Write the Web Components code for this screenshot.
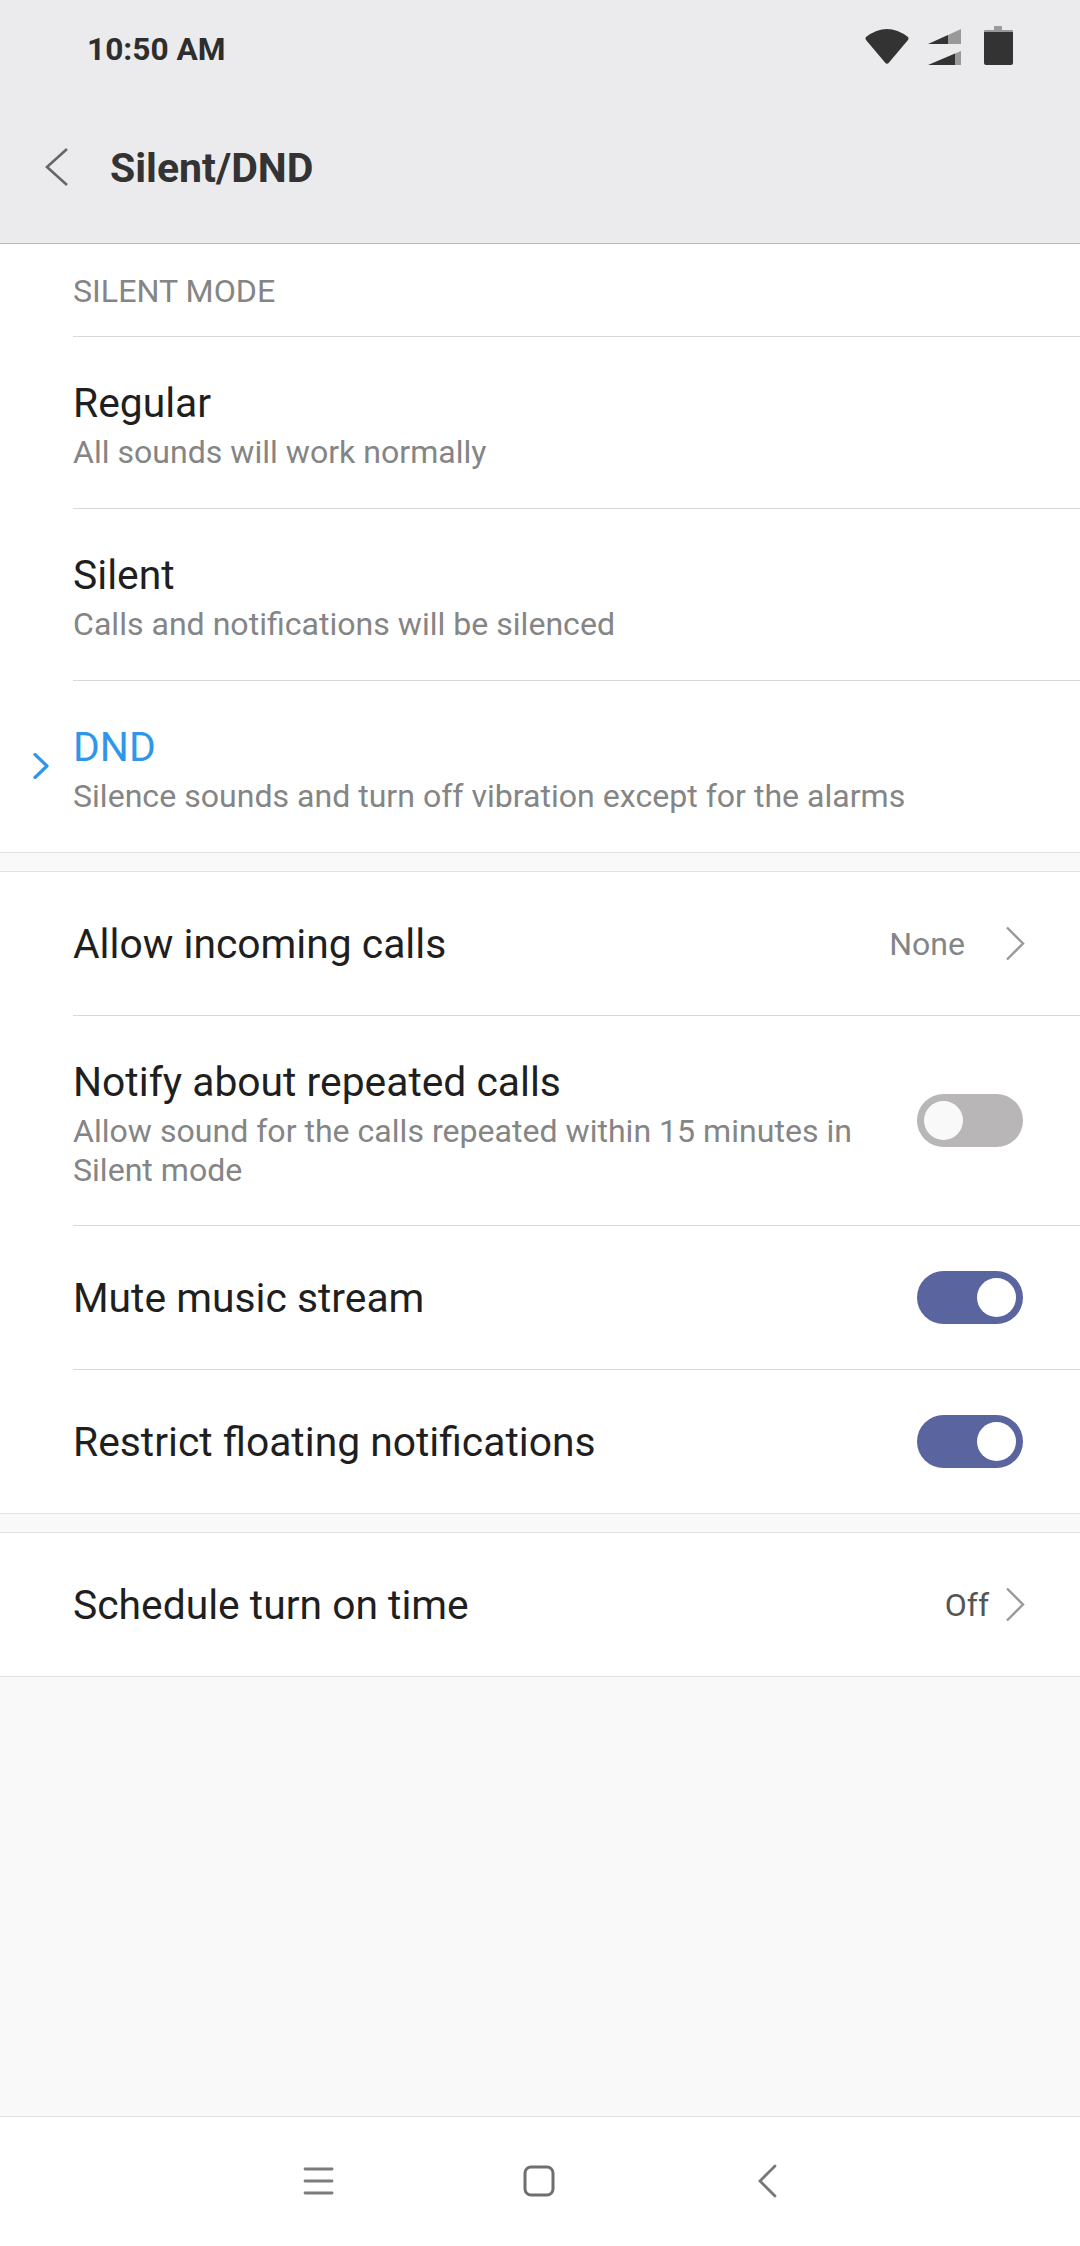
<!DOCTYPE html>
<html>
<head>
<meta charset="utf-8">
<title>Silent/DND</title>
<style>
  html, body { margin: 0; padding: 0; }
  body {
    width: 1080px;
    height: 2246px;
    background: #f9f9f9;
    font-family: Roboto, "Liberation Sans", sans-serif;
    display: flex;
    flex-direction: column;
    overflow: hidden;
  }
  dnd-spacer { flex: 1; }
</style>
</head>
<body>
<template id="header-tpl">
  <style>
    :host { display: block; height: 243px; background: #ebebed; border-bottom: 1px solid #b9b9b9; color: #333; }
    .status { height: 97px; display: flex; align-items: center; justify-content: space-between; padding: 0 64px 0 87px; }
    .time { font-size: 31.700px; font-weight: 700; color: #2e2e2e; padding-top: 1px; }
    .bar { height: 145px; display: flex; align-items: center; padding: 0 0 5px 44px; box-sizing: border-box; }
    h1 { margin: 2px 0 0 40px; font-size: 41px; font-weight: 700; color: #333; }
    svg { display: block; }
  </style>
  <div class="status">
    <span class="time">10:50 AM</span>
    <svg width="152" height="49" viewBox="0 0 152 49">
      <path d="M2 13Q23 -3 44 13Q45 14.500 44 16L25 38.500Q23 41 21 38.500L2 16Q1 14.500 2 13Z" fill="#333"/>
      <path d="M64 20L84 10.900V20Z" fill="#333"/>
      <path d="M84 10.900L97 5V20H84Z" fill="#999"/>
      <path d="M64 41L91 29.500V41Z" fill="#333"/>
      <path d="M91 29.500L97 27V41H91Z" fill="#999"/>
      <path d="M130 6V3Q130 2 131 2H137Q138 2 138 3V6H148Q149 6 149 7V9H120V7Q120 6 121 6Z" fill="#999"/>
      <path d="M120 8H149V39Q149 41 147 41H122Q120 41 120 39Z" fill="#333"/>
    </svg>
  </div>
  <div class="bar">
    <svg width="26" height="40" viewBox="0 0 26 40"><path d="M23 2L3 20L23 38" fill="none" stroke="#666" stroke-width="2.600"/></svg>
    <h1><slot></slot></h1>
  </div>
</template>

<template id="label-tpl">
  <style>
    :host { display: block; background: #fff; padding-left: 73px; }
    div { height: 90px; padding-top: 2px; border-bottom: 1px solid #d8d8d8; display: flex; align-items: center; font-size: 32.200px; color: #858585; }
  </style>
  <div><slot></slot></div>
</template>

<template id="row-tpl">
  <style>
    :host { display: block; background: #fff; padding-left: 73px; position: relative; }
    :host([last]) .row { border-bottom: 0; }
    :host([full]) { border-bottom: 1px solid #e2e2e2; }
    :host([full]) .row { border-bottom: 0; }
    .row { display: flex; align-items: center; box-sizing: border-box; border-bottom: 1px solid #d8d8d8; padding-right: 57px; height: var(--h, 144px); }
    .text { flex: 1; min-width: 0; padding-top: 1px; }
    .title { font-size: 40.800px; line-height: 48px; color: #1f1f1f; }
    :host([selected]) .title { color: #2f96ea; }
    .sub { font-size: 32.100px; line-height: 39px; color: #858585; margin-top: 6px; margin-bottom: -5px; }
    .mark { position: absolute; left: 33px; top: 72px; }
    .mark[hidden] { display: none; }
    svg { display: block; }
  </style>
  <svg class="mark" width="16" height="26" viewBox="0 0 16 26" hidden id="mark"><path d="M2 1.500L14 13L2 24.500" fill="none" stroke="#2f96ea" stroke-width="3.200" stroke-linecap="round" stroke-linejoin="round"/></svg>
  <div class="row">
    <div class="text">
      <div class="title" id="title"></div>
      <div class="sub" id="sub"><slot></slot></div>
    </div>
    <slot name="end"></slot>
  </div>
</template>

<template id="value-tpl">
  <style>
    :host { display: flex; align-items: center; margin-right: -2px; }
    span { font-size: 32px; color: #858585; }
    :host([dark]) span { color: #555; }
    svg { display: block; margin-left: var(--gap, 40px); }
  </style>
  <span><slot></slot></span>
  <svg width="20" height="36" viewBox="0 0 20 36"><path d="M2 1.500L18 17.500L2 33.500" fill="none" stroke="#999" stroke-width="2.400"/></svg>
</template>

<template id="toggle-tpl">
  <style>
    :host { display: block; width: 106px; height: 53px; border-radius: 27px; background: #b8b6b6; position: relative; }
    :host([on]) { background: #5a65a0; }
    i { position: absolute; left: 7px; top: 7px; width: 39px; height: 39px; border-radius: 50%; background: #f9f9f9; }
    :host([on]) i { left: 60px; background: #fff; }
  </style>
  <i></i>
</template>

<template id="gap-tpl">
  <style>
    :host { display: block; height: 18px; background: #f9f9f9; border-top: 1px solid #e2e2e2; border-bottom: 1px solid #e2e2e2; }
  </style>
</template>

<template id="nav-tpl">
  <style>
    :host { display: flex; box-sizing: border-box; height: 130px; background: #fff; border-top: 1px solid #e2e2e2; align-items: center; padding: 0 0 2px 302px; }
    svg { display: block; }
    .home { margin-left: 189px; }
    .back { margin-left: 202px; }
  </style>
  <svg width="32" height="30" viewBox="0 0 32 30"><path d="M3 3H30M3 15H30M3 27H30" stroke="#7c7c7c" stroke-width="2.800" stroke-linecap="round"/></svg>
  <svg class="home" width="32" height="32" viewBox="0 0 32 32"><rect x="2" y="2" width="28" height="28" rx="6" fill="none" stroke="#6f6f6f" stroke-width="3"/></svg>
  <svg class="back" width="20" height="34" viewBox="0 0 20 34"><path d="M18 2L3 17L18 32" fill="none" stroke="#777" stroke-width="2.800" stroke-linecap="round"/></svg>
</template>

<dnd-header>Silent/DND</dnd-header>
<dnd-label>SILENT MODE</dnd-label>
<dnd-row title="Regular" style="--h:172px">All sounds will work normally</dnd-row>
<dnd-row title="Silent" style="--h:172px">Calls and notifications will be silenced</dnd-row>
<dnd-row title="DND" selected last style="--h:171px">Silence sounds and turn off vibration except for the alarms</dnd-row>
<dnd-gap></dnd-gap>
<dnd-row title="Allow incoming calls"><dnd-value slot="end">None</dnd-value></dnd-row>
<dnd-row title="Notify about repeated calls" style="--h:210px">Allow sound for the calls repeated within 15 minutes in Silent mode<dnd-toggle slot="end"></dnd-toggle></dnd-row>
<dnd-row title="Mute music stream"><dnd-toggle slot="end" on></dnd-toggle></dnd-row>
<dnd-row title="Restrict floating notifications" last style="--h:143px"><dnd-toggle slot="end" on></dnd-toggle></dnd-row>
<dnd-gap></dnd-gap>
<dnd-row title="Schedule turn on time" full style="--h:143px"><dnd-value slot="end" dark style="--gap:16px">Off</dnd-value></dnd-row>
<dnd-spacer></dnd-spacer>
<dnd-nav></dnd-nav>

<script>
  function simple(tag, tplId) {
    customElements.define(tag, class extends HTMLElement {
      constructor() {
        super();
        this.attachShadow({ mode: "open" });
        this.shadowRoot.appendChild(document.getElementById(tplId).content.cloneNode(true));
      }
    });
  }

  simple("dnd-header", "header-tpl");
  simple("dnd-label", "label-tpl");
  simple("dnd-value", "value-tpl");
  simple("dnd-toggle", "toggle-tpl");
  simple("dnd-gap", "gap-tpl");
  simple("dnd-nav", "nav-tpl");

  class DndRow extends HTMLElement {
    constructor() {
      super();
      this.attachShadow({ mode: "open" });
      this.shadowRoot.appendChild(document.getElementById("row-tpl").content.cloneNode(true));
    }
    connectedCallback() {
      this.shadowRoot.getElementById("title").textContent = this.getAttribute("title");
      // svg has no .hidden property, so go through the attribute
      this.shadowRoot.getElementById("mark").toggleAttribute("hidden", !this.hasAttribute("selected"));
      // rows without a description drop the empty line
      const hasSub = [...this.childNodes].some(n => n.nodeType === 3 && n.textContent.trim());
      this.shadowRoot.getElementById("sub").style.display = hasSub ? "" : "none";
    }
  }
  customElements.define("dnd-row", DndRow);
</script>
</body>
</html>
